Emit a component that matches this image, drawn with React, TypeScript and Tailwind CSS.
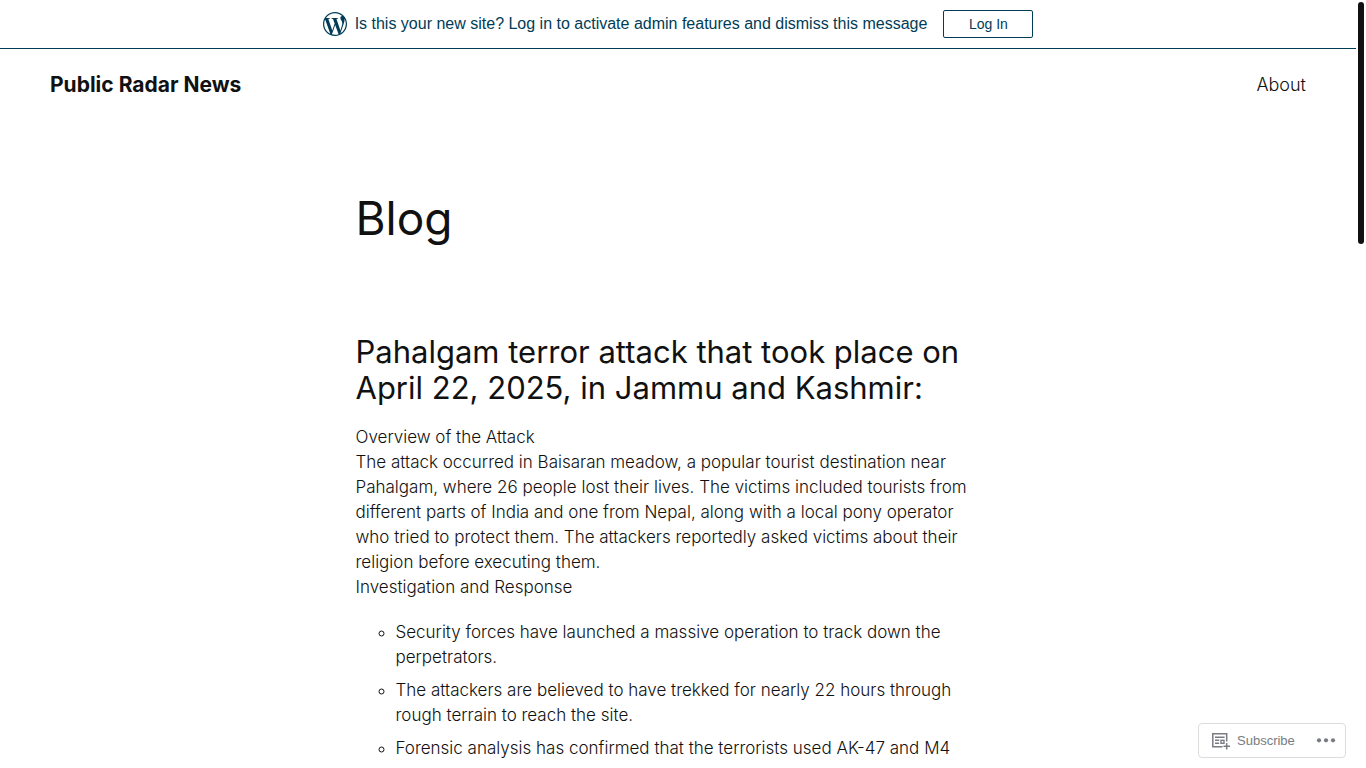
import React from "react";
import { SiWordpress } from "react-icons/si";

const findings = [
  "Security forces have launched a massive operation to track down the perpetrators.",
  "The attackers are believed to have trekked for nearly 22 hours through rough terrain to reach the site.",
  "Forensic analysis has confirmed that the terrorists used AK-47 and M4",
];

function LoginBanner() {
  return (
    <div className="flex h-[49px] shrink-0 items-center justify-center border-b border-[#003c56] font-['Liberation_Sans',Arial,sans-serif] text-[#003c56]">
      <SiWordpress className="mr-2 size-6" aria-hidden="true" />
      <p className="text-base leading-6">
        Is this your new site? Log in to activate admin features and dismiss this message
      </p>
      <button type="button" className="ml-4 h-7 w-[90px] rounded-xs border border-[#003c56] text-sm">
        Log In
      </button>
    </div>
  );
}

function SubscribeIcon() {
  return (
    <svg viewBox="0 0 20 20" className="size-5" fill="none" stroke="currentColor" strokeWidth="1.5" aria-hidden="true">
      <path d="M11.5 15.8H1.8V2.8H15.7V10.5" />
      <path d="M4 6.3H13.6M4 9.3H8.2M4 12.3H8.2" strokeWidth="1.4" />
      <rect x="10" y="9.3" width="3" height="3" strokeWidth="1.4" />
      <path d="M15.7 12V18.6M12.4 15.3H19" />
    </svg>
  );
}

export default function App() {
  return (
    <div className="flex h-screen overflow-hidden bg-white font-[Inter,sans-serif] text-[#111111]">
      <div className="flex min-w-0 flex-1 flex-col">
        <LoginBanner />
        <header className="flex shrink-0 items-center justify-between px-[50px] pt-5">
          <a href="#home" className="text-[21px] leading-8 font-bold">Public Radar News</a>
          <nav>
            <a href="#about" className="text-lg leading-8 font-light">About</a>
          </nav>
        </header>
        <main className="mx-auto w-full max-w-[645px] pt-[87px]">
          <h1 className="text-[46px] leading-[60px]">Blog</h1>
          <article className="pt-[86px]">
            <h2 className="text-[31px] leading-9">
              Pahalgam terror attack that took place on April 22, 2025, in Jammu and Kashmir:
            </h2>
            <p className="mt-[19px] pr-5 text-[17px] leading-[25px] font-light">
              Overview of the Attack
              <br />
              The attack occurred in Baisaran meadow, a popular tourist destination near Pahalgam, where 26 people lost
              their lives. The victims included tourists from different parts of India and one from Nepal, along with a
              local pony operator who tried to protect them. The attackers reportedly asked victims about their religion
              before executing them.
              <br />
              Investigation and Response
            </p>
            <ul className="mt-5 list-[circle] space-y-2 pl-10 text-[17px] leading-[25px] font-light">
              {findings.map((item) => (
                <li key={item}>{item}</li>
              ))}
            </ul>
          </article>
        </main>
      </div>
      <div className="w-[10px] shrink-0 px-0.5 pt-0.5" aria-hidden="true">
        <div className="h-[242px] rounded-full bg-[#111111]" />
      </div>
      <div className="fixed right-5 bottom-[10px] flex h-[35px] w-[148px] items-center justify-between rounded-sm border border-[#dcdcde] bg-white pr-[9px] pl-3 font-['Liberation_Sans',Arial,sans-serif] text-[13px] text-[#787c82]">
        <button type="button" className="flex items-center gap-1.5">
          <SubscribeIcon />
          Subscribe
        </button>
        <button type="button" aria-label="More options">
          <svg viewBox="0 0 20 20" className="size-5" fill="currentColor" aria-hidden="true">
            <circle cx="3" cy="9.3" r="2.1" />
            <circle cx="10" cy="9.3" r="2.1" />
            <circle cx="17" cy="9.3" r="2.1" />
          </svg>
        </button>
      </div>
    </div>
  );
}
